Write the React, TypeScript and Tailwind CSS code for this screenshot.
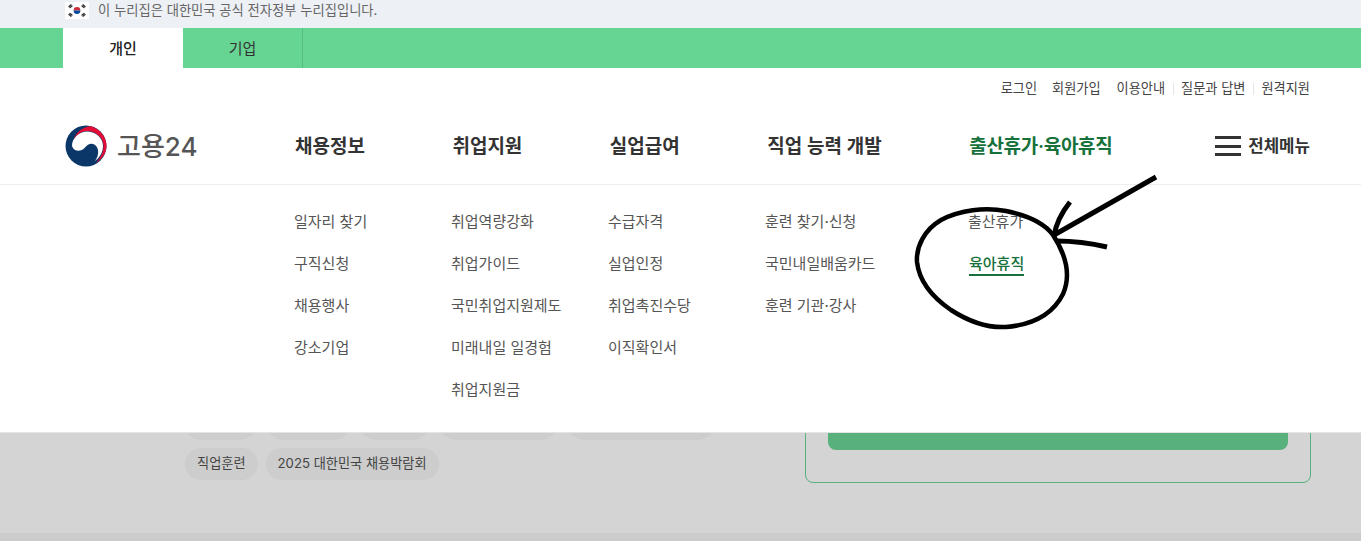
import React from "react";

const font = "font-['Inter','Noto_Sans_CJK_KR','Noto_Sans',sans-serif]";

const navItems = ["채용정보", "취업지원", "실업급여", "직업 능력 개발"];

const subMenus = [
  ["일자리 찾기", "구직신청", "채용행사", "강소기업"],
  ["취업역량강화", "취업가이드", "국민취업지원제도", "미래내일 일경험", "취업지원금"],
  ["수급자격", "실업인정", "취업촉진수당", "이직확인서"],
  ["훈련 찾기·신청", "국민내일배움카드", "훈련 기관·강사"],
];

const hiddenChips = ["w-[71px]", "w-[83px]", "w-[69px]", "w-[117px]", "w-[146px]"];

const Flag = () => (
  <svg width="24" height="17" viewBox="0 0 24 17" className="shrink-0 bg-white">
    <path d="M8.6 8.5a3.4 3.4 0 0 1 6.8 0z" fill="#cd2e3a" />
    <path d="M8.6 8.500a3.4 3.4 0 0 0 6.8 0z" fill="#0047a0" />
    <g stroke="#333" strokeWidth="1.3" strokeLinecap="round">
      <path d="M4 4.5 6 2.8M5 5.6l2-1.700" />
      <path d="M18 2.8l2 1.7M17 3.9l2 1.7" />
      <path d="M4 12.5l2 1.7M5 11.4l2 1.7" />
      <path d="M18 14.2l2-1.7M17 13.1l2-1.7" />
    </g>
  </svg>
);

const Logo = () => (
  <svg width="42" height="42" viewBox="0 0 42 42" className="shrink-0">
    <circle cx="21" cy="21" r="20.5" fill="#0b3768" />
    <path d="M7 21C7 13 14 6.500 22 6.500C31 6.500 38 13 38 21C38 28 34 33 30 36C34.500 30 34 23 30 20C26 17 22 20 19.500 23C16 27 9 27 7 21Z" fill="#fff" />
    <path d="M8.500 15C11 7 18 1.500 26 1.200C35 4 41.500 12 41.500 21C41.500 28 37 34 31 38C36 32 38.500 27 38.500 21C38.500 12 30 6 22 6C16 6 11 10 8.500 15Z" fill="#e30d35" />
  </svg>
);

export default function App() {
  return (
    <div className={`relative flex h-[541px] w-full flex-col overflow-hidden bg-[#d4d4d4] ${font}`}>
      {/* 정부 배너 */}
      <div className="flex h-7 items-center gap-[9px] bg-[#edf0f5] pb-[7px] pl-[65px] text-[13.3px] text-[#666]">
        <Flag />
        <span>이 누리집은 대한민국 공식 전자정부 누리집입니다.</span>
      </div>

      {/* 개인/기업 탭 */}
      <div className="flex h-10 bg-[#66d492] pl-[63px] text-[15px]">
        <div className="flex w-[120px] items-center justify-center bg-white pt-[2px] font-medium text-[#222]">개인</div>
        <div className="flex w-[120px] items-center justify-center border-r border-[#57bd80] pt-[2px] text-[#333]">기업</div>
      </div>

      {/* 헤더 */}
      <header className="flex h-[117px] flex-col border-b border-[#eeeeee] bg-white">
        <div className="flex h-10 items-center justify-end pr-[51px] pt-[2px] text-[13.2px] text-[#444]">
          <span>로그인</span>
          <span className="ml-[15px]">회원가입</span>
          <span className="ml-[16px]">이용안내</span>
          <span className="ml-[8px] mr-[7px] h-3 w-px bg-[#e5e5e5]" />
          <span>질문과 답변</span>
          <span className="ml-[8px] mr-[7px] h-3 w-px bg-[#e5e5e5]" />
          <span>원격지원</span>
        </div>
        <div className="flex h-[77px] items-center pl-[65px] pr-[51px] pt-px">
          <div className="flex w-[230px] items-center gap-[10px]">
            <Logo />
            <span className="text-[26px] font-medium text-[#555]">고용24</span>
          </div>
          <nav className="flex flex-1 gap-[87.500px] pt-[2px] text-[19px] font-semibold text-[#333]">
            {navItems.map((item) => (
              <span key={item}>{item}</span>
            ))}
            <span className="tracking-[-0.3px] text-[#16713b]">출산휴가·육아휴직</span>
          </nav>
          <div className="flex items-center gap-[7px]">
            <div className="flex w-[26px] flex-col gap-[5.500px]">
              <span className="h-[3px] bg-[#333]" />
              <span className="h-[3px] bg-[#333]" />
              <span className="h-[3px] bg-[#333]" />
            </div>
            <span className="text-[16.800px] font-semibold text-[#333]">전체메뉴</span>
          </div>
        </div>
      </header>

      {/* 메가 메뉴 */}
      <div className="grid h-[248px] grid-cols-[157px_157px_157px_203px_auto] border-b border-[#e4e4e4] bg-white pl-[294px] pt-[16px] text-[15px] text-[#555]">
        {subMenus.map((col) => (
          <ul key={col[0]} className="flex flex-col">
            {col.map((label) => (
              <li key={label} className="flex h-[42px] items-center">
                {label}
              </li>
            ))}
          </ul>
        ))}
        <ul className="flex flex-col">
          <li className="flex h-[42px] items-center">출산휴가</li>
          <li className="flex h-[42px] items-center pl-px">
            <span className="border-b-2 border-[#16713b] pt-px font-medium leading-[21px] text-[#16713b]">육아휴직</span>
          </li>
        </ul>
      </div>

      {/* 메뉴 아래 본문 */}
      <div className="flex flex-1 justify-between overflow-hidden pl-[185px] pr-[50px]">
        <div className="-mt-[25px] flex flex-col gap-2">
          <div className="flex gap-[10.7px]">
            {hiddenChips.map((w) => (
              <span key={w} className={`h-8 rounded-full bg-[#cdcdcd] ${w}`} />
            ))}
          </div>
          <div className="flex gap-2 text-[13.2px] text-[#444]">
            <span className="flex h-8 items-center rounded-full bg-[#cdcdcd] px-3">직업훈련</span>
            <span className="flex h-8 items-center rounded-full bg-[#cdcdcd] px-3">2025 대한민국 채용박람회</span>
          </div>
        </div>
        <div className="-mt-4 h-[66px] w-[506px] rounded-b-lg border border-[#58b17c] px-[22px]">
          <div className="h-[32px] rounded-b-lg bg-[#58b17c]" />
        </div>
      </div>
      <div className="h-2 bg-[#cccccc]" />

      {/* 손으로 그린 표시 */}
      <svg className="pointer-events-none absolute left-0 top-0" width="1361" height="541" fill="none" stroke="#000" strokeLinecap="butt" strokeLinejoin="round">
        <path
          d="M1053 235C1045 224 1030 216 1006 211C985 207 960 210 941 220C924 230 916 247 917 262C919 280 932 297 951 310C968 321 988 328 1006 327C1030 325 1052 316 1063 294C1070 278 1068 258 1053 235Z"
          strokeWidth="4.500"
        />
        <path d="M1156 177 1054 235" strokeWidth="5" />
        <path d="M1070 202C1062 212 1056 224 1054 236" strokeWidth="5" />
        <path d="M1056 241C1075 241 1090 243 1107 247" strokeWidth="5" />
      </svg>
    </div>
  );
}
